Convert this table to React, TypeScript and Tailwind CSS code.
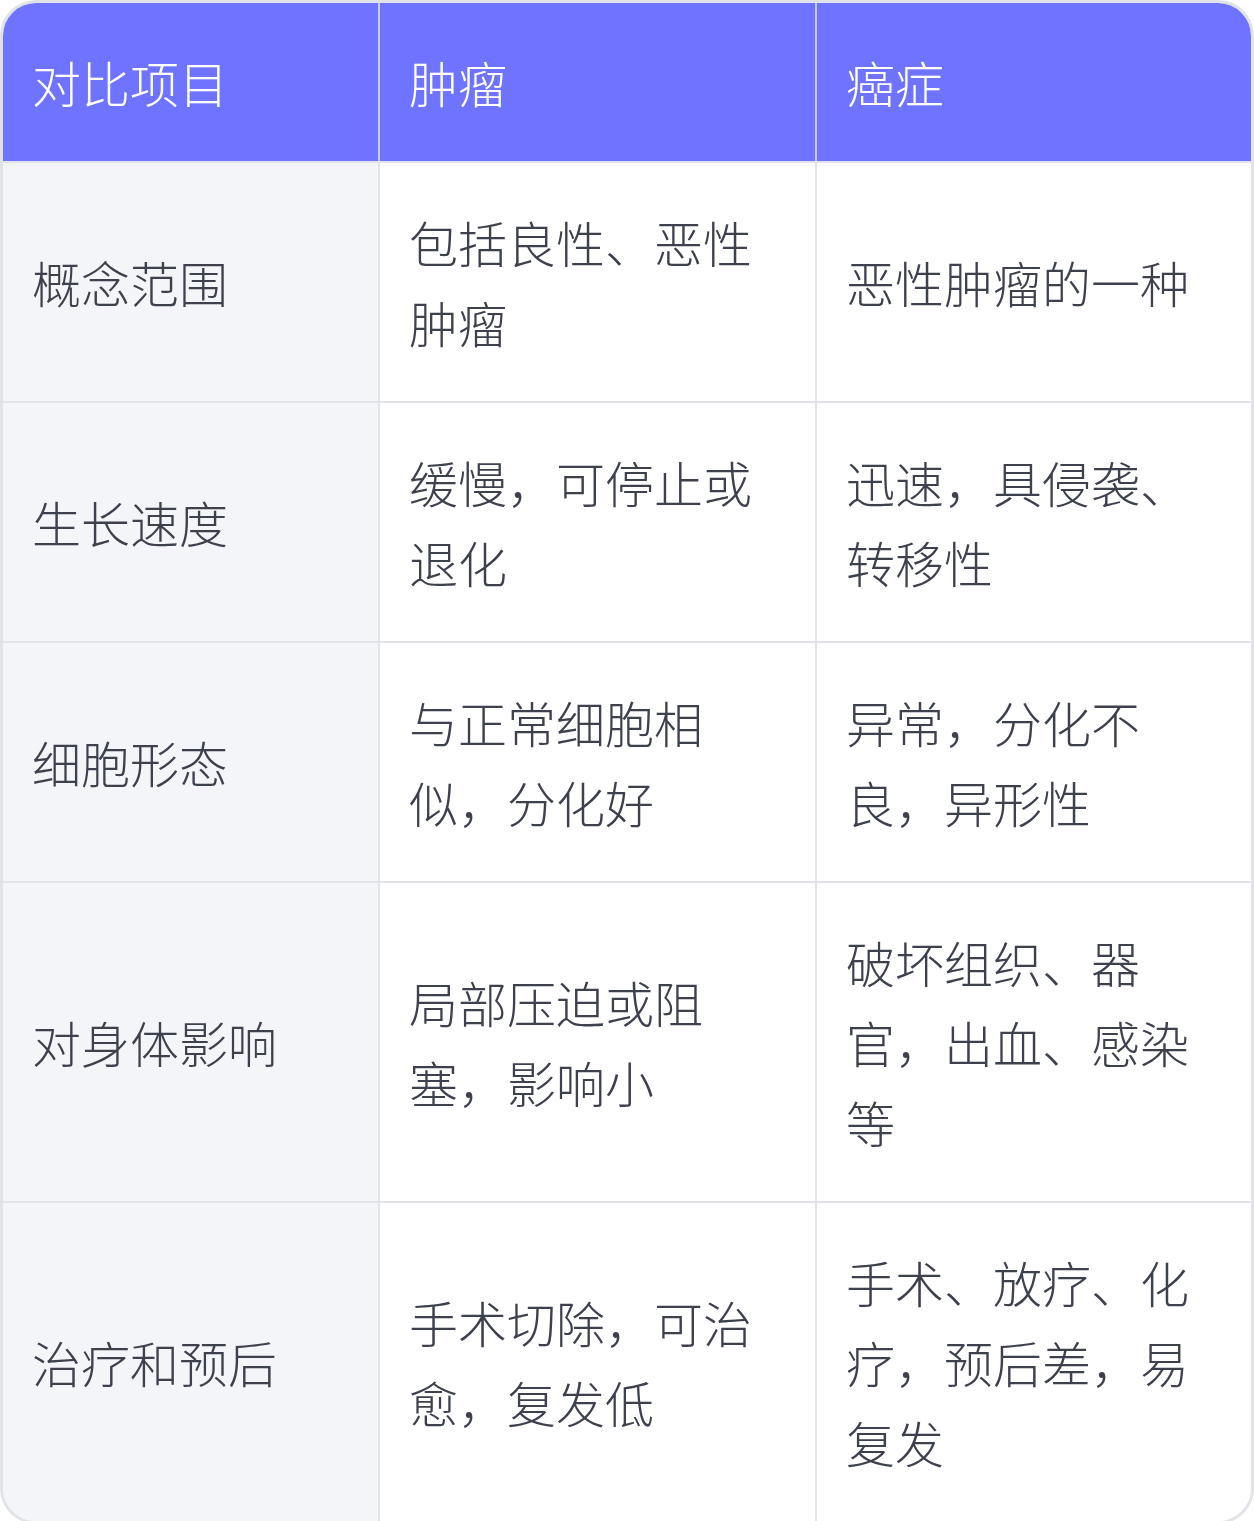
const header = ['对比项目', '肿瘤', '癌症']

const rows: [string, string, string][] = [
  ['概念范围', '包括良性、恶性肿瘤', '恶性肿瘤的一种'],
  ['生长速度', '缓慢，可停止或退化', '迅速，具侵袭、转移性'],
  ['细胞形态', '与正常细胞相似，分化好', '异常，分化不良，异形性'],
  ['对身体影响', '局部压迫或阻塞，影响小', '破坏组织、器官，出血、感染等'],
  ['治疗和预后', '手术切除，可治愈，复发低', '手术、放疗、化疗，预后差，易复发'],
]

export default function App() {
  return (
    <div className="w-[1254px] bg-white font-light" style={{ fontFamily: '"Noto Sans CJK SC", "Noto Sans", sans-serif' }}>
      <div className="overflow-hidden rounded-[36px] border-[3px] border-[#e2e3e8]">
        {/* Header */}
        <div className="grid grid-cols-[375px_437px_1fr] bg-[#6e74ff] text-white">
          {header.map((h, i) => (
            <div
              key={h}
              className={`px-[29px] py-[39px] text-[49px] leading-[80px] ${i > 0 ? 'border-l-2 border-[#c9cbf3]' : ''}`}
            >
              {h}
            </div>
          ))}
        </div>

        {/* Body */}
        {rows.map((row) => (
          <div key={row[0]} className="grid grid-cols-[375px_437px_1fr] border-t-2 border-[#e2e3e8]">
            {row.map((cell, i) => (
              <div
                key={i}
                className={`flex items-center px-[29px] py-[39px] text-[49px] leading-[80px] text-[#3d404d] ${
                  i === 0 ? 'bg-[#f4f5f9]' : 'border-l-2 border-[#e2e3e8] bg-white'
                }`}
              >
                <span>{cell}</span>
              </div>
            ))}
          </div>
        ))}
      </div>
    </div>
  )
}
